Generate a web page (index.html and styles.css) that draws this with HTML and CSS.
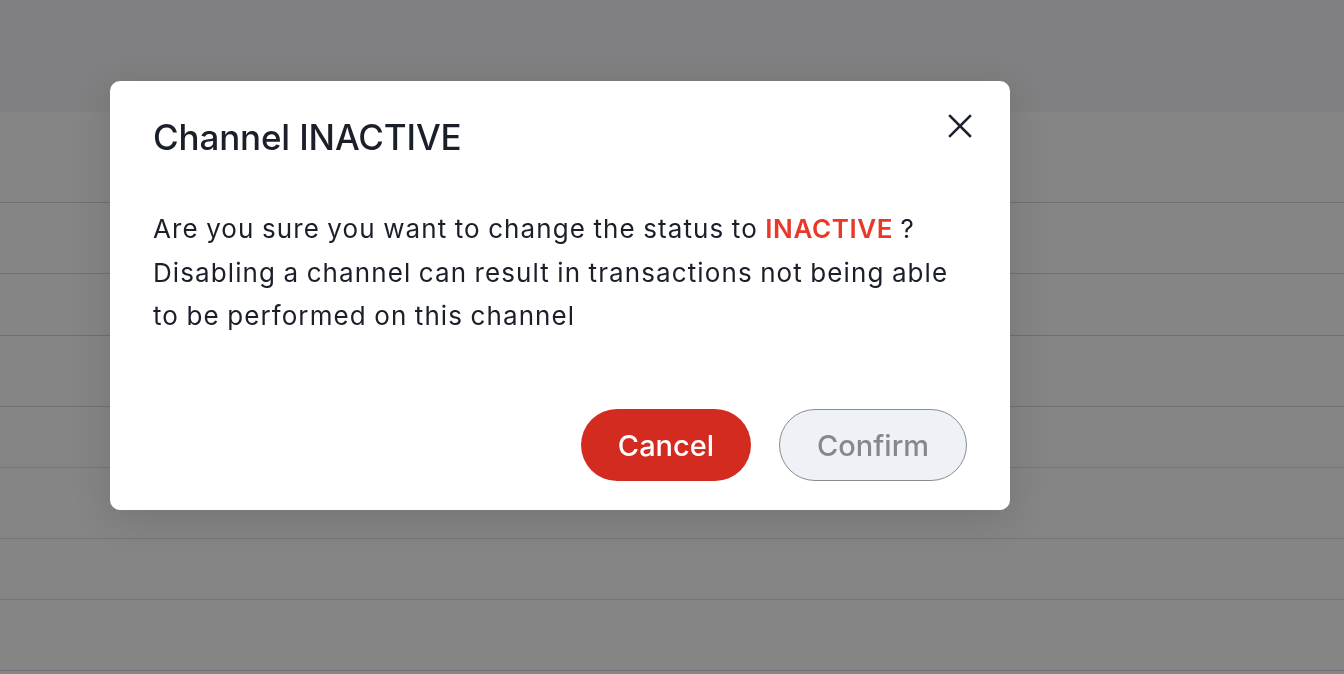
FILE: index.html
```html
<!DOCTYPE html>
<html>
<head>
<meta charset="utf-8">
<link rel="stylesheet" href="styles.css">
</head>
<body>
<div class="page">
  <div class="topbar"></div>
  <div class="table">
    <div class="row r1"></div>
    <div class="row r2"></div>
    <div class="row r3"></div>
    <div class="row r4"></div>
    <div class="row r5"></div>
    <div class="row r6"></div>
    <div class="row r7"></div>
    <div class="row r8"></div>
  </div>
</div>
<div class="overlay">
  <div class="modal">
    <div class="modal-head">
      <h2 class="title">Channel INACTIVE</h2>
      <button class="close" aria-label="Close">
        <svg width="24" height="24" viewBox="0 0 24 24"><path d="M2 2L22 22M22 2L2 22" stroke="#1c2230" stroke-width="2.5" stroke-linecap="square" fill="none"/></svg>
      </button>
    </div>
    <p class="msg">Are you sure you want to change the status to <span class="hl">INACTIVE</span> ? Disabling a channel can result in transactions not being able to be performed on this channel</p>
    <div class="actions">
      <button class="btn cancel">Cancel</button>
      <button class="btn confirm">Confirm</button>
    </div>
  </div>
</div>
</body>
</html>
```
FILE: styles.css
```css
html, body {
  margin: 0;
  padding: 0;
  height: 100%;
  overflow: hidden;
}
body {
  font-family: Inter, "Noto Sans", sans-serif;
  background: #858585;
}
.page {
  display: flex;
  flex-direction: column;
  height: 674px;
}
.topbar {
  height: 112px;
  background: #807f81;
  flex: none;
}
.table {
  display: flex;
  flex-direction: column;
}
.row {
  flex: none;
  border-bottom: 1px solid #6f6d77;
}
.r1 { height: 90px; }
.r2 { height: 70px; }
.r3 { height: 61px; }
.r4 { height: 70px; }
.r5 { height: 60px; border-bottom-color: #757479; }
.r6 { height: 70px; border-bottom-color: #757479; }
.r7 { height: 60px; border-bottom-color: #757479; }
.r8 { height: 70px; }
.overlay {
  position: fixed;
  inset: 0;
  display: flex;
  align-items: flex-start;
  padding: 81px 0 0 110px;
}
.modal {
  width: 900px;
  box-sizing: border-box;
  height: 429px;
  background: #fff;
  border-radius: 10px;
  padding: 36px 43px 29px 43px;
  display: flex;
  flex-direction: column;
  box-shadow: 0 10px 40px rgba(0,0,0,0.12);
}
.modal-head {
  display: flex;
  justify-content: space-between;
  align-items: flex-start;
}
.title {
  margin: 0;
  font-size: 35px;
  font-weight: 500;
  color: #1b1f2a;
  line-height: 40px;
  letter-spacing: -0.15px;
}
.close {
  border: 0;
  background: none;
  padding: 0;
  margin: -3px -5px 0 0;
  width: 24px;
  height: 24px;
  cursor: pointer;
}
.close svg { display: block; }
.msg {
  margin: 50px 0 0 0;
  font-size: 26px;
  line-height: 43.5px;
  color: #1b1f2a;
  font-weight: 400;
  letter-spacing: 1.1px;
  word-spacing: -1px;
}
.hl {
  color: #e8382a;
  font-weight: 600;
  letter-spacing: 0.6px;
}
.actions {
  margin-top: auto;
  display: flex;
  justify-content: flex-end;
  gap: 28px;
}
.btn {
  height: 72px;
  border-radius: 36px;
  font-family: Inter, "Noto Sans", sans-serif;
  font-size: 29px;
  font-weight: 500;
  cursor: pointer;
}
.cancel {
  width: 170px;
  background: #d42b20;
  color: #fff;
  border: 0;
}
.confirm {
  width: 188px;
  background: #eef1f6;
  color: #86888b;
  border: 1px solid #8c8c8e;
}
```
